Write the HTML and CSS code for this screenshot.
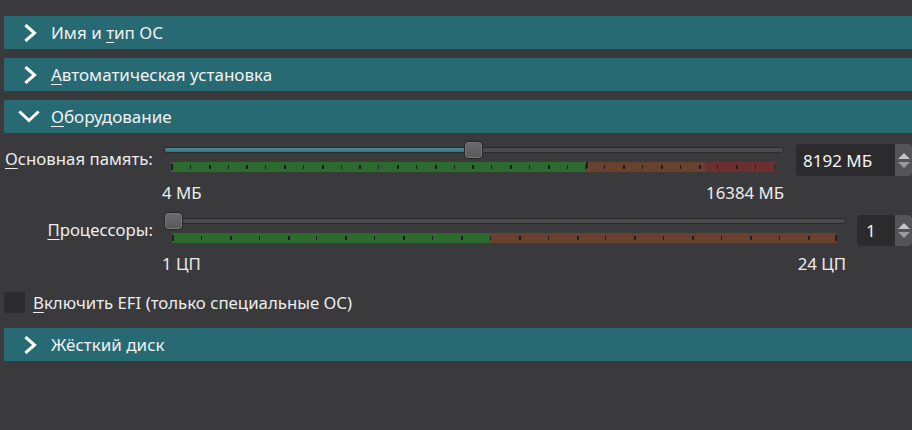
FILE: index.html
```html
<!DOCTYPE html>
<html>
<head>
<meta charset="utf-8">
<link rel="stylesheet" href="styles.css">
</head>
<body>
<div class="page">
  <div class="section-head">
    <span class="chev"><svg width="14" height="18" viewBox="0 0 14 18"><polyline points="2.5,2 10.5,9 2.5,16" fill="none" stroke="#fff" stroke-width="3" stroke-linecap="square"/></svg></span>
    <span class="title">Имя и <u>т</u>ип ОС</span>
  </div>
  <div class="section-head">
    <span class="chev"><svg width="14" height="18" viewBox="0 0 14 18"><polyline points="2.5,2 10.5,9 2.5,16" fill="none" stroke="#fff" stroke-width="3" stroke-linecap="square"/></svg></span>
    <span class="title"><u>А</u>втоматическая установка</span>
  </div>
  <div class="section-head">
    <span class="chev chev-down"><svg width="22" height="14" viewBox="0 0 22 14"><polyline points="2.5,2.5 11,10.5 19.5,2.5" fill="none" stroke="#fff" stroke-width="3" stroke-linecap="square"/></svg></span>
    <span class="title"><u>О</u>борудование</span>
  </div>

  <div class="hardware">
    <div class="row">
      <div class="lbl lbl-left"><u>О</u>сновная память:</div>
      <div class="slider mem-slider">
        <div class="track">
          <div class="groove"><div class="fill fill-mem"></div></div>
          <div class="handle handle-mem"></div>
        </div>
        <div class="scale mem-scale"></div>
        <div class="minmax"><span>4 МБ</span><span>16384 МБ</span></div>
      </div>
      <div class="spin spin-mem">
        <span class="val">8192 МБ</span>
        <div class="btns"><i class="up"></i><i class="down"></i></div>
      </div>
    </div>

    <div class="row">
      <div class="lbl lbl-right"><u>П</u>роцессоры:</div>
      <div class="slider cpu-slider">
        <div class="track">
          <div class="groove"></div>
          <div class="handle handle-cpu"></div>
        </div>
        <div class="scale cpu-scale"></div>
        <div class="minmax"><span>1 ЦП</span><span>24 ЦП</span></div>
      </div>
      <div class="spin spin-cpu">
        <span class="val">1</span>
        <div class="btns"><i class="up"></i><i class="down"></i></div>
      </div>
    </div>

    <div class="check-row">
      <span class="checkbox"></span>
      <span class="check-text"><u>В</u>ключить EFI (только специальные ОС)</span>
    </div>
  </div>

  <div class="section-head">
    <span class="chev"><svg width="14" height="18" viewBox="0 0 14 18"><polyline points="2.5,2 10.5,9 2.5,16" fill="none" stroke="#fff" stroke-width="3" stroke-linecap="square"/></svg></span>
    <span class="title">Жёсткий диск</span>
  </div>
</div>
</body>
</html>
```

FILE: styles.css
```css
html, body {
  margin: 0;
  padding: 0;
  background: #3a3a3c;
  height: 100%;
  overflow: hidden;
}
body {
  font-family: "Noto Sans", "Open Sans", sans-serif;
  font-size: 16.8px;
  color: #ececec;
}
u {
  text-decoration-thickness: 1px;
  text-underline-offset: 3px;
}
.page {
  padding: 16px 0 0 4px;
}
.section-head {
  height: 33px;
  background: #276a74;
  display: flex;
  align-items: center;
  margin-bottom: 9px;
  color: #f2f2f2;
  font-size: 17px;
}
.chev {
  width: 47px;
  display: flex;
  align-items: center;
  padding-left: 20px;
  box-sizing: border-box;
}
.chev-down {
  padding-left: 14px;
}
.chev svg { display: block; }

.hardware {
  margin-top: -1px;
  padding-bottom: 15px;
}
.row {
  display: flex;
  align-items: flex-start;
  margin-bottom: 9px;
}
.lbl {
  width: 160px;
  box-sizing: border-box;
  padding-top: 7px;
  line-height: 22px;
  white-space: nowrap;
}
.lbl-left { padding-left: 1px; }
.lbl-right { text-align: right; padding-right: 11px; }

.slider { display: flex; flex-direction: column; }
.mem-slider { width: 620px; }
.cpu-slider { width: 682px; }

.track {
  position: relative;
  height: 18px;
  display: flex;
  align-items: center;
}
.groove {
  height: 4px;
  width: 100%;
  box-sizing: content-box;
  border: 1px solid #2a2a2c;
  border-radius: 3px;
  background: #4a4a4c;
  overflow: hidden;
}
.fill {
  height: 100%;
  background: linear-gradient(#4b8d97, #2f7580);
}
.fill-mem { width: 300px; }
.handle {
  position: absolute;
  top: 0;
  width: 17px;
  height: 16px;
  border: 1px solid #262628;
  border-radius: 4px;
  background: linear-gradient(#6a6a6c, #59595b);
  box-shadow: inset 0 0 0 1px #767678;
}
.handle-mem { left: 300px; }
.handle-cpu { left: 0; }

.scale {
  height: 10px;
  margin-top: 3px;
  background-repeat: no-repeat;
}
.mem-scale {
  margin-left: 7px;
  width: 604px;
  background-image:
    linear-gradient(#1f1f21, #1f1f21),
    linear-gradient(#1f1f21, #1f1f21),
    repeating-linear-gradient(90deg, #1e1e1e 0 2px, transparent 2px 18.84px, #1e1e1e 18.84px 19.84px, transparent 19.84px 37.68px),
    linear-gradient(90deg, #2d6a2f 0 415px, #6a412e 415px 534px, #6c2f30 534px);
  background-size: 2px 6px, 2px 6px, 100% 4px, 100% 100%;
  background-position: 0 2px, 415px 0, 0 3px, 0 0;
}
.cpu-scale {
  margin-left: 8px;
  width: 665px;
  background-image:
    linear-gradient(#1f1f21, #1f1f21),
    linear-gradient(#1f1f21, #1f1f21),
    repeating-linear-gradient(90deg, #1e1e1e 0 2px, transparent 2px 28.9px, #1e1e1e 28.9px 29.9px, transparent 29.9px 57.8px),
    linear-gradient(90deg, #2d6a2f 0 317px, #6a412e 317px);
  background-size: 2px 6px, 2px 6px, 100% 4px, 100% 100%;
  background-position: 0 2px, 663px 2px, 0 3px, 0 0;
}
.minmax {
  display: flex;
  justify-content: space-between;
  margin-top: 11px;
  line-height: 20px;
  margin-left: -2px;
}

.spin {
  margin-top: 3px;
  display: flex;
  background: #2b2b2d;
  border-radius: 4px;
  overflow: hidden;
}
.spin-mem { margin-left: 12px; width: 116px; height: 32px; }
.spin-cpu { margin-left: 11px; width: 55px; height: 31px; }
.val {
  flex: 1;
  display: flex;
  align-items: center;
  padding-left: 7px;
  font-size: 17px;
  color: #f4f4f4;
}
.spin-cpu .val { padding-left: 9px; }
.btns {
  width: 17px;
  background: #545456;
  display: flex;
  flex-direction: column;
  justify-content: center;
  align-items: center;
  gap: 3px;
}
.btns i {
  display: block;
  width: 0;
  height: 0;
  border-left: 6px solid transparent;
  border-right: 6px solid transparent;
}
.btns .up { border-bottom: 6px solid #c4c4c4; }
.btns .down { border-top: 6px solid #9a9a9a; }

.check-row {
  display: flex;
  align-items: center;
  margin-top: 18px;
  height: 21px;
}
.checkbox {
  width: 21px;
  height: 21px;
  background: #2c2c2e;
  border-radius: 2px;
  margin-right: 8px;
}
.check-text { line-height: 21px; }
```
